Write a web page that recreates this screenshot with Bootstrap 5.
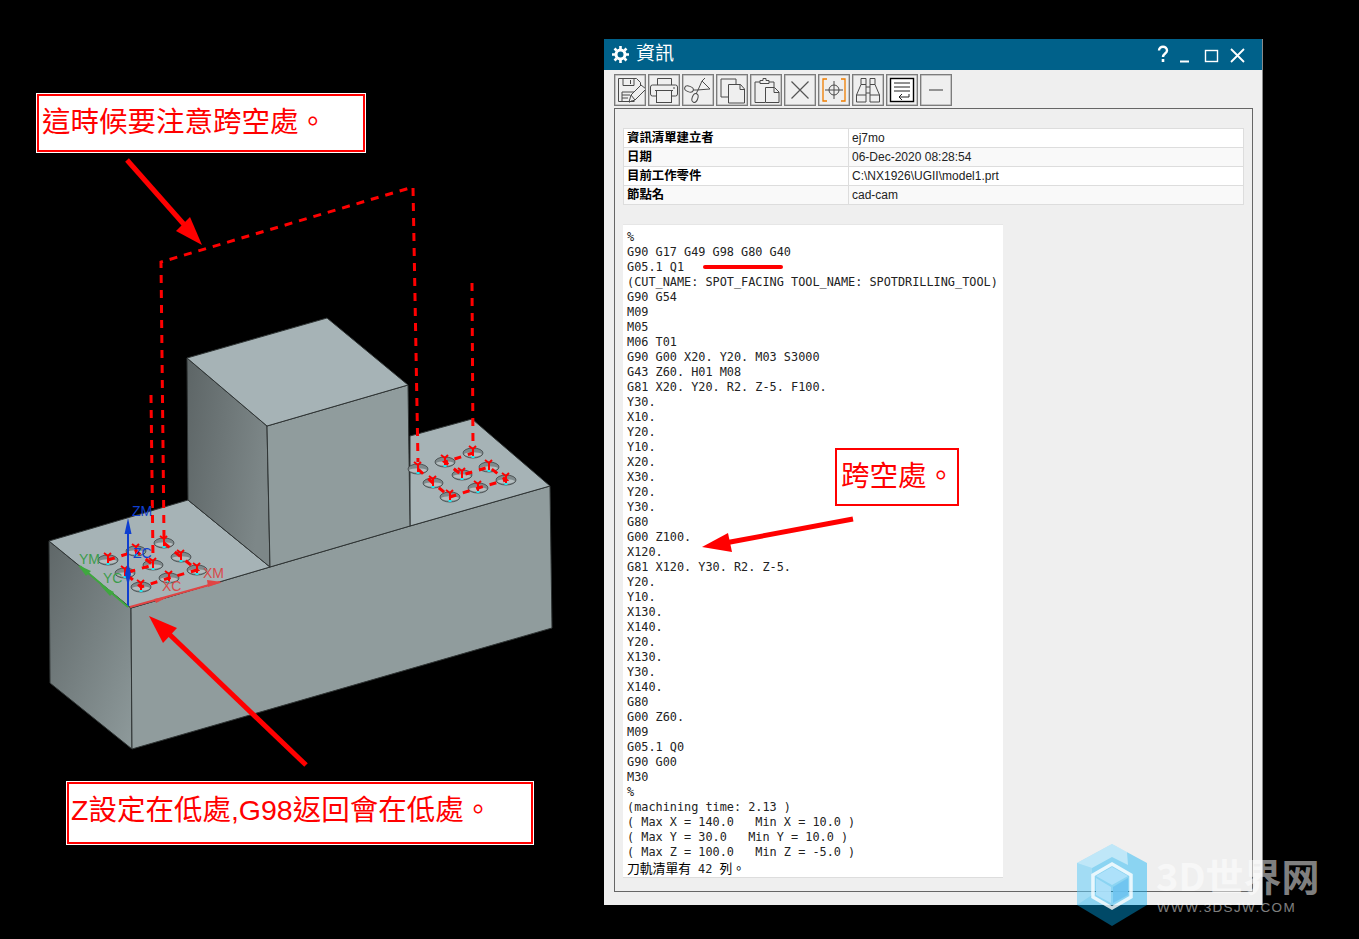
<!DOCTYPE html>
<html lang="en">
<head>
  <meta charset="UTF-8" />
  <title>NX 資訊</title>
  <link href="https://cdn.jsdelivr.net/npm/bootstrap@5.3.0/dist/css/bootstrap.min.css" rel="stylesheet" />
  <style>
    body { background: #000; font-family: "Liberation Sans", "Noto Sans CJK TC", sans-serif; }
    .stage { width: 1359px; height: 939px; background: #000; overflow: hidden; }
    .model-art { left: 0; top: 0; }
    .callout { background: #fff; color: #f00; border: 2px solid #f00; outline: 1px solid #fff; font-size: 28.5px; line-height: 1; white-space: nowrap; }
    .callout-a { left: 37px; top: 94px; width: 328px; height: 58px; padding: 12px 0 0 3px; }
    .callout-b { left: 67px; top: 782px; width: 466px; height: 62px; padding: 12px 0 0 2px; }
    .callout-c { left: 835px; top: 448px; width: 124px; height: 58px; padding: 12px 0 0 4px; outline: 0; z-index: 3; }
    .nx-window { left: 604px; top: 39px; width: 659px; height: 866px; background: #efefef; border-right: 1px solid #8a8a8a; }
    .nx-title { height: 31px; background: #00618a; color: #fff; font-size: 19px; }
    .nx-title-text { margin-left: 7px; }
    .tool-row { padding: 4px 0 0 10px; gap: 2px; }
    .tool-btn { width: 32px; height: 32px; padding: 0; border: 1px solid #7c7c7c; border-radius: 0; background: #efefef; box-shadow: inset 0 0 0 .5px #9a9a9a; }
    .tool-btn svg { display: block; }
    .info-panel { margin: 2px 9px 13px 10px; padding: 19px 8px 0 8px; border: 1px solid #666; border-right-width: 1px; }
    .meta-table { width: 621px; margin: 0; font-size: 12px; line-height: 18px; table-layout: fixed; --bs-table-bg: transparent; border-color: #ddd; }
    .meta-table td { padding: 0 3px; height: 19px; color: #222; }
    .meta-table tr:nth-child(odd) td { background: #fff; }
    .meta-table tr:nth-child(even) td { background: #f9f9f9; }
    .meta-table td:first-child { width: 225px; font-weight: 700; color: #000; font-size: 12.4px; }
    .nc-output { width: 380px; height: 654px; margin: 19px 0 0 0; padding: 5px 0 0 4px; background: #fff; border-top: 1px solid #e6e6e6; border-bottom: 1px solid #ddd; overflow: hidden; font-family: "DejaVu Sans Mono", "Liberation Mono", "Noto Sans CJK TC", monospace; font-size: 11.85px; line-height: 15px; color: #222; }
    .nc-cjk { font-family: "Noto Sans CJK TC", sans-serif; font-size: 12.8px; color: #000; }
    .nc-mark { left: 703px; top: 265px; width: 80px; height: 4px; background: #f00; border-radius: 2px; }
    .wm-art { left: 1070px; top: 838px; z-index: 4; }
    .wm-big { font-family: "Noto Sans CJK SC", sans-serif; font-weight: 700; font-size: 38px; fill: rgba(255,255,255,.52); }
    .wm-small { font-family: "Liberation Sans", sans-serif; font-size: 13.5px; letter-spacing: 1.35px; fill: rgba(255,255,255,.5); }
    .axis-label { font-family: "Liberation Sans", sans-serif; font-size: 14px; }
  </style>
</head>
<body>
<div class="stage position-relative">

  <!-- NX graphics window: block, holes, tool path -->
  <svg class="model-art position-absolute" width="1359" height="939" viewBox="0 0 1359 939">
    <defs>
      <linearGradient id="sideA" x1="0" y1="0" x2="1" y2="0.3">
        <stop offset="0" stop-color="#5d6566" /><stop offset="1" stop-color="#7d8788" />
      </linearGradient>
      <linearGradient id="sideB" x1="0" y1="0" x2="1" y2="1">
        <stop offset="0" stop-color="#5f6768" /><stop offset="1" stop-color="#8e9a9b" />
      </linearGradient>
      <g id="hole">
        <ellipse cx="0" cy="0" rx="10" ry="5" fill="#7f8a8c" stroke="#3d4344" stroke-width=".8" />
        <path d="M-9 1a9.500 4 0 0 0 18 0a10 3 0 0 0 -18 0z" fill="#b5bec0" />
        <path d="M0 4v-9M0 -4l-4 -3M0 -4l3 -3" stroke="#f00" stroke-width="2" fill="none" />
        <rect x="-1.500" y="3" width="3" height="2" fill="#1fe6f0" />
      </g>
    </defs>

    <polygon points="49,541 131,608 132,749 50,683" fill="url(#sideB)" stroke="#2f3434" />
    <polygon points="131,608 270,567 410,526 550,486 552,628 132,749" fill="#909c9d" stroke="#2f3434" />
    <polygon points="49,541 188,500 270,567 131,608" fill="#a6b3b6" stroke="#2f3434" />
    <polygon points="410,436 472,419 550,486 410,526" fill="#a6b3b6" stroke="#2f3434" />
    <polygon points="187,358 267,426 270,567 188,500" fill="url(#sideA)" stroke="#2f3434" />
    <polygon points="267,426 408,385 410,526 270,567" fill="#909c9d" stroke="#2f3434" />
    <polygon points="187,358 327,318 408,385 267,426" fill="#a6b3b6" stroke="#2f3434" />

    <use href="#hole" x="164" y="543" /><use href="#hole" x="181" y="557" /><use href="#hole" x="197" y="570" />
    <use href="#hole" x="108" y="560" /><use href="#hole" x="125" y="573" /><use href="#hole" x="141" y="587" />
    <use href="#hole" x="153" y="565" /><use href="#hole" x="169" y="578" /><use href="#hole" x="136" y="551" />
    <use href="#hole" x="473" y="453" /><use href="#hole" x="445" y="462" /><use href="#hole" x="489" y="467" />
    <use href="#hole" x="462" y="475" /><use href="#hole" x="506" y="480" /><use href="#hole" x="418" y="469" />
    <use href="#hole" x="433" y="483" /><use href="#hole" x="478" y="488" /><use href="#hole" x="450" y="497" />

    <!-- rapid moves -->
    <g fill="none" stroke="#f00" stroke-width="3">
      <path d="M164 538L161 262L413 187L418 462" stroke-dasharray="8 7" />
      <path d="M151 395L153 558" stroke-dasharray="8 7" />
      <path d="M472 283L473 447" stroke-dasharray="8 7" />
      <path d="M418 469L433 483L450 497L478 488L506 480L489 467L462 475L445 462L473 453" stroke-dasharray="7 7" />
      <path d="M164 543L181 557L197 570L169 578L141 587L125 573L153 565L136 551L108 560" stroke-dasharray="7 7" />
    </g>

    <!-- WCS triad -->
    <path d="M128 606L128 530" stroke="#0f3fd0" stroke-width="2" />
    <path d="M128 518l-3.500 16h7z" fill="#0f3fd0" />
    <path d="M128 586l-3 -12l3 -12l3 12z" fill="#0f3fd0" />
    <path d="M128 607L80 566" stroke="#3fa83f" stroke-width="2" />
    <path d="M78 565l13 6l-5 5z" fill="#3fa83f" /><path d="M100 585l14 7l-4 4z" fill="#3fa83f" />
    <path d="M130 607L220 582" stroke="#e04545" stroke-width="2" />
    <path d="M222 582l-15 -2l1 7z" fill="#e04545" /><path d="M170 596l-16 3l2 4z" fill="#e04545" />
    <text class="axis-label" x="132" y="516" fill="#0f3fd0">ZM</text>
    <text class="axis-label" x="133" y="558" fill="#0f3fd0">ZC</text>
    <text class="axis-label" x="79" y="564" fill="#3c9c4c">YM</text>
    <text class="axis-label" x="103" y="583" fill="#3c9c4c">YC</text>
    <text class="axis-label" x="162" y="591" fill="#d84a4a">XC</text>
    <text class="axis-label" x="203" y="578" fill="#d84a4a">XM</text>

    <!-- pointers -->
    <path d="M127 160L188 229" stroke="#f00" stroke-width="5" />
    <polygon points="202,245 176,231 190,217" fill="#f00" />
    <path d="M306 765L168 633" stroke="#f00" stroke-width="5" />
    <polygon points="149,616 177,628 163,643" fill="#f00" />
  </svg>

  <div class="callout callout-a position-absolute">這時候要注意跨空處。</div>
  <div class="callout callout-b position-absolute">Z設定在低處,G98返回會在低處。</div>

  <!-- Information window -->
  <div class="nx-window position-absolute d-flex flex-column">
    <div class="nx-title d-flex align-items-center">
      <svg class="ms-2 flex-shrink-0" width="17" height="17" viewBox="0 0 17 17" fill="none" stroke="#fff">
        <circle cx="8.500" cy="8.500" r="4.500" stroke-width="3" />
        <path d="M8.500 0v3M8.500 14v3M0 8.500h3M14 8.500h3M2.500 2.500l2 2M12.500 12.500l2 2M2.500 14.500l2 -2M12.500 4.500l2 -2" stroke-width="2.600" />
      </svg>
      <span class="nx-title-text">資訊</span>
      <div class="ms-auto d-flex align-items-center">
        <svg width="100" height="24" viewBox="0 0 100 24" fill="none" stroke="#fff">
          <text x="0" y="0" fill="none" stroke="none"></text>
          <path d="M3 7.500c0 -5 8 -5 8 0c0 3 -4 3 -4 6.500" stroke-width="2.400" />
          <path d="M7 16v3" stroke-width="2.600" />
          <path d="M24 18.500h9" stroke-width="2" />
          <rect x="49.500" y="7.500" width="12" height="11" stroke-width="1.400" />
          <path d="M75 6l13 13M88 6l-13 13" stroke-width="1.800" />
        </svg>
        <span class="d-inline-block" style="width:6px"></span>
      </div>
    </div>

    <div class="tool-row d-flex">
      <button class="btn tool-btn" type="button" aria-label="Save">
        <svg width="30" height="30" viewBox="0 0 30 30" fill="none" stroke="#4a4a4a"><path d="M3.500 3.500h18l4 4v5M3.500 3.500v23h16" /><path d="M8 3.500v7h11v-7M15.500 5v4M7 26v-9h12" /><path d="M7 20h8M7 23h6" /><path d="M14 27l2 -7l10 -10l5 4l-11 11z" fill="#efefef" /><path d="M16 20l4 5M14 27l3 -1" /></svg>
      </button>
      <button class="btn tool-btn" type="button" aria-label="Print">
        <svg width="30" height="30" viewBox="0 0 30 30" fill="none" stroke="#4a4a4a"><path d="M8.500 10V3.500h14V10" /><path d="M8 21H3.500q-2 0 -2 -2v-7q0 -2 2 -2h23q2 0 2 2v7q0 2 -2 2H23" /><rect x="7.500" y="15.500" width="15" height="12" /><path d="M6 15.500h18M24 13h2" /></svg>
      </button>
      <button class="btn tool-btn" type="button" aria-label="Cut">
        <svg width="30" height="30" viewBox="0 0 30 30" fill="none" stroke="#4a4a4a"><ellipse cx="6" cy="14" rx="4.500" ry="2.800" transform="rotate(20 6 14)" /><ellipse cx="12" cy="23" rx="2.800" ry="4.500" transform="rotate(20 12 23)" /><path d="M10 15l4 0l13 -1l-8 -8l-4 9M13 19l2 -4" /><path d="M19 6l3 -3" /></svg>
      </button>
      <button class="btn tool-btn" type="button" aria-label="Copy">
        <svg width="30" height="30" viewBox="0 0 30 30" fill="none" stroke="#4a4a4a"><path d="M11 22H4V4h15v5" /><path d="M11.500 9.500h12l4 4.500v14h-16z" fill="#efefef" /><path d="M23 9.500v5h4.500" /></svg>
      </button>
      <button class="btn tool-btn" type="button" aria-label="Paste">
        <svg width="30" height="30" viewBox="0 0 30 30" fill="none" stroke="#4a4a4a"><path d="M14 27.500H4V7h5M18 7h5v5" /><path d="M9 8.500V5.500h3v-2h3v2h3v3z" /><path d="M14.500 12.500h9l4.500 4.500v10.500h-13.500z" fill="#efefef" /><path d="M23 12.500v5h5" /></svg>
      </button>
      <button class="btn tool-btn" type="button" aria-label="Delete">
        <svg width="30" height="30" viewBox="0 0 30 30" fill="none" stroke="#555"><path d="M6.500 6.500l17 17M23.500 6.500l-17 17" stroke-width="1.200" /></svg>
      </button>
      <button class="btn tool-btn" type="button" aria-label="Center">
        <svg width="30" height="30" viewBox="0 0 30 30" fill="none"><path d="M8 4H4v22h4M22 4h4v22h-4" stroke="#ef7d00" stroke-width="1.300" /><circle cx="15" cy="15" r="5" stroke="#4a4a4a" /><path d="M15 6v18M6 15h18" stroke="#4a4a4a" /></svg>
      </button>
      <button class="btn tool-btn" type="button" aria-label="Find">
        <svg width="30" height="30" viewBox="0 0 30 30" fill="none" stroke="#4a4a4a"><path d="M8 3.500h5v6h-5zM17 3.500h5v6h-5z" /><path d="M8 9.500L3.500 20v7h9.500V9.500M22 9.500L26.500 20v7H17V9.500" /><path d="M3.500 20H13M17 20h9.500M13 12h4M13 18h4" /></svg>
      </button>
      <button class="btn tool-btn" type="button" aria-label="Wrap">
        <svg width="30" height="30" viewBox="0 0 30 30" fill="none" stroke="#222"><rect x="3.500" y="3.500" width="23" height="23" fill="#fff" stroke="#000" stroke-width="1.400" /><path d="M7 8h16M7 12h16M7 16h16" /><path d="M22 19v3h-10M15 19l-3 3l3 3" /></svg>
      </button>
      <button class="btn tool-btn" type="button" aria-label="Minimize">
        <svg width="30" height="30" viewBox="0 0 30 30" fill="none" stroke="#555"><path d="M8 15h14" stroke-width="1.200" /></svg>
      </button>
    </div>

    <div class="info-panel flex-grow-1">
      <table class="table table-bordered meta-table">
        <tbody>
          <tr><td>資訊清單建立者</td><td>ej7mo</td></tr>
          <tr><td>日期</td><td>06-Dec-2020 08:28:54</td></tr>
          <tr><td>目前工作零件</td><td>C:\NX1926\UGII\model1.prt</td></tr>
          <tr><td>節點名</td><td>cad-cam</td></tr>
        </tbody>
      </table>
<pre class="nc-output">%
G90 G17 G49 G98 G80 G40
G05.1 Q1
(CUT_NAME: SPOT_FACING TOOL_NAME: SPOTDRILLING_TOOL)
G90 G54
M09
M05
M06 T01
G90 G00 X20. Y20. M03 S3000
G43 Z60. H01 M08
G81 X20. Y20. R2. Z-5. F100.
Y30.
X10.
Y20.
Y10.
X20.
X30.
Y20.
Y30.
G80
G00 Z100.
X120.
G81 X120. Y30. R2. Z-5.
Y20.
Y10.
X130.
X140.
Y20.
X130.
Y30.
X140.
G80
G00 Z60.
M09
G05.1 Q0
G90 G00
M30
%
(machining time: 2.13 )
( Max X = 140.0   Min X = 10.0 )
( Max Y = 30.0   Min Y = 10.0 )
( Max Z = 100.0   Min Z = -5.0 )
<span class="nc-cjk">刀軌清單有</span> 42 <span class="nc-cjk">列。</span></pre>
    </div>
  </div>

  <div class="nc-mark position-absolute"></div>
  <div class="callout callout-c position-absolute">跨空處。</div>

  <svg class="position-absolute model-art" width="1359" height="939" viewBox="0 0 1359 939" style="z-index:3">
    <path d="M853 519L725 543" stroke="#f00" stroke-width="5" />
    <polygon points="702,547 728,533 732,552" fill="#f00" />
  </svg>

  <!-- watermark -->
  <svg class="wm-art position-absolute" width="289" height="95" viewBox="1070 838 289 95">
    <polygon points="1112,844 1147,863 1147,905 1112,926 1077,905 1077,863" fill="rgba(0,175,245,.42)" />
    <polygon points="1112,844 1127,852 1128,865 1112,857 1092,868 1077,863" fill="rgba(255,255,255,.45)" />
    <polygon points="1077,863 1092,868 1092,895 1077,905" fill="rgba(255,255,255,.2)" />
    <polygon points="1112,864 1131,875 1131,897 1112,908 1093,897 1093,875" fill="none" stroke="rgba(255,255,255,.8)" stroke-width="3.500" />
    <polygon points="1112,867 1128,876 1112,885 1096,876" fill="rgba(175,225,250,.95)" />
    <polygon points="1096,878 1111,887 1111,903 1096,895" fill="rgba(175,225,250,.9)" />
    <polygon points="1113,887 1128,878 1128,895 1113,903" fill="rgba(110,195,240,.9)" />
    <text class="wm-big" x="1156" y="891">3D世界网</text>
    <text class="wm-small" x="1157" y="912">WWW.3DSJW.COM</text>
  </svg>
</div>
<script src="https://cdn.jsdelivr.net/npm/bootstrap@5.3.0/dist/js/bootstrap.bundle.min.js"></script>
</body>
</html>
